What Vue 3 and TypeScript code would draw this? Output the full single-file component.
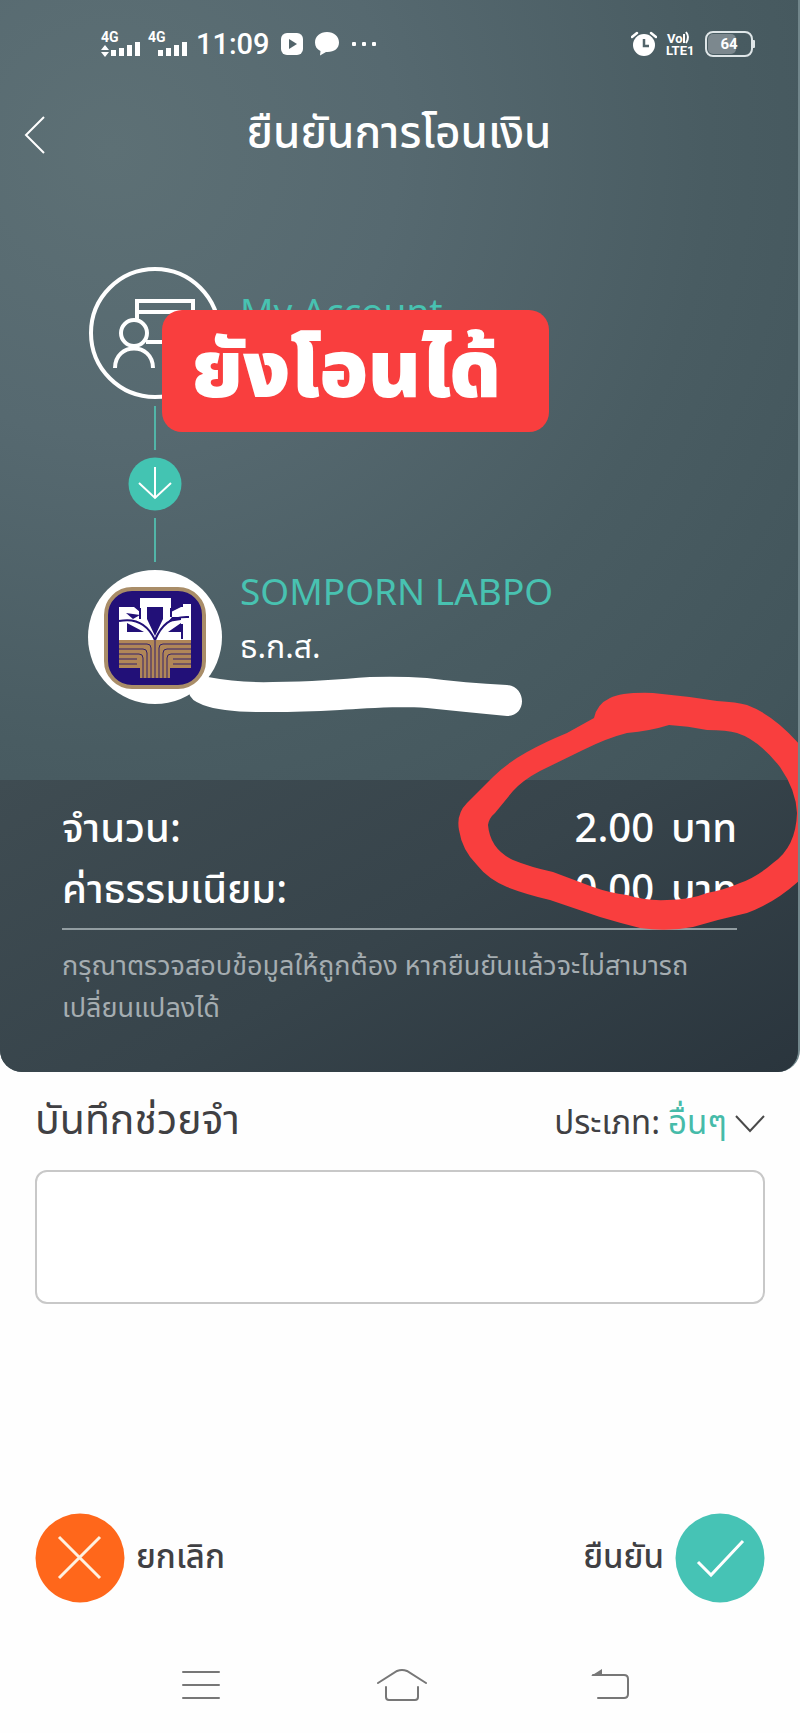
<script setup lang="ts">
import { ref } from 'vue'

interface Charge {
  label: string
  amount: string
}

const charges: Charge[] = [
  { label: 'จำนวน:', amount: '2.00' },
  { label: 'ค่าธรรมเนียม:', amount: '0.00' },
]

const memo = ref<string>('')
const category = ref<string>('อื่นๆ')
const bars: number[] = [6, 8, 11, 14]
</script>

<template>
  <div class="screen">
    <section class="hero">
      <div class="status">
        <div class="status-group">
          <svg class="signal" viewBox="0 0 40 36" aria-hidden="true">
            <text x="1" y="16" class="net">4G</text>
            <path d="M1 24l4-5 4 5zM1 26l4 5 4-5z" fill="#fff" />
            <rect v-for="(h, i) in bars" :key="i" :x="11 + i * 8" :y="30 - h" width="5" :height="h" fill="#fff" />
          </svg>
          <svg class="signal" viewBox="0 0 40 36" aria-hidden="true">
            <text x="1" y="16" class="net">4G</text>
            <rect v-for="(h, i) in bars" :key="i" :x="11 + i * 8" :y="30 - h" width="5" :height="h" fill="#fff" />
          </svg>
          <span class="clock">11:09</span>
          <svg class="play" viewBox="0 0 22 22" aria-hidden="true">
            <rect x="0" y="0" width="22" height="22" rx="6" fill="#fff" />
            <path d="M8 6v10l8-5z" fill="#52646a" />
          </svg>
          <svg class="bubble" viewBox="0 0 26 26" aria-hidden="true">
            <path d="M13 1C6 1 1 5.500 1 11.500c0 4 2 7 5.500 8.500L6 24.500l6-3.500c8 .5 13-3.500 13-9.500S20 1 13 1z" fill="#fff" />
          </svg>
          <svg class="dots" viewBox="0 0 26 6" aria-hidden="true">
            <rect x="1" y="1" width="4" height="4" rx="1" fill="#fff" />
            <rect x="11" y="1" width="4" height="4" rx="1" fill="#fff" />
            <rect x="21" y="1" width="4" height="4" rx="1" fill="#fff" />
          </svg>
        </div>
        <div class="status-group system-info">
          <svg class="alarm" viewBox="0 0 26 26" aria-hidden="true">
            <circle cx="13" cy="14" r="11" fill="#fff" />
            <path d="M1 6l5-4M25 6l-5-4" stroke="#fff" stroke-width="2.500" stroke-linecap="round" />
            <path d="M13 8v7h5" fill="none" stroke="#52646a" stroke-width="2.500" />
          </svg>
          <svg class="volte" viewBox="0 0 30 30" aria-hidden="true">
            <text x="1" y="14" class="vo">Vo</text>
            <path d="M18 5v9M20 3q4 5 0 11" fill="none" stroke="#fff" stroke-width="2" />
            <text x="0" y="26" class="vo">LTE1</text>
          </svg>
          <svg class="battery" viewBox="0 0 50 26" aria-hidden="true">
            <rect x="3" y="3" width="28" height="20" rx="5" fill="#7c888e" />
            <rect x="1" y="1" width="46" height="24" rx="7" fill="none" stroke="#dfe6e8" stroke-width="2" />
            <rect x="47" y="9" width="3" height="8" rx="1" fill="#dfe6e8" />
            <text x="24" y="18" text-anchor="middle" class="level">64</text>
          </svg>
        </div>
      </div>

      <header class="topbar">
        <button class="back" type="button" aria-label="กลับ">
          <svg viewBox="0 0 22 38" aria-hidden="true">
            <path d="M20 1L2 19l18 18" fill="none" stroke="#fff" stroke-width="2" />
          </svg>
        </button>
        <h1>ยืนยันการโอนเงิน</h1>
      </header>

      <div class="transfer">
        <div class="party from">
          <svg class="avatar" viewBox="0 0 134 134" aria-hidden="true">
            <g fill="none" stroke="#fff" stroke-width="4">
              <circle cx="67" cy="67" r="64" />
              <circle cx="46" cy="67" r="13" />
              <path d="M27 102c0-26 38-26 38 0M49 54V35h56v41H58M49 46h56" />
            </g>
          </svg>
          <p class="name">My Account</p>
        </div>
        <div class="flow">
          <span class="line"></span>
          <svg class="arrow" viewBox="0 0 54 54" aria-hidden="true">
            <circle cx="27" cy="27" r="26.500" fill="#43c4b2" />
            <path d="M27 10v31M11 26l16 15 16-15" fill="none" stroke="#fff" stroke-width="2" />
          </svg>
          <span class="line"></span>
        </div>
        <div class="party">
          <svg class="avatar" viewBox="0 0 134 134" aria-hidden="true">
            <circle cx="67" cy="67" r="67" fill="#fff" />
            <rect x="18" y="19" width="98" height="98" rx="26" fill="#221078" stroke="#a98d68" stroke-width="4" />
            <path d="M31 37h15l6 5V28h31v14l10-5h2v-3h8v36H31z" fill="#fff" />
            <path d="M59 37h16v12l-8 17-8-17zM38 43l14 2-7 4zM84 47h9v3l-13 2zM39 53l17 9H39zM80 62l13-9v9z" fill="#221078" />
            <path d="M31 51c20-4 30 6 36 19 6-14 15-24 34-23M94 54v15M52 38v11M83 38v9" fill="none" stroke="#221078" stroke-width="2" />
            <path d="M31 70h72v28H82v10H52V98H31z" fill="#b08658" />
            <g fill="none" stroke="#33206a" stroke-width="1">
              <path d="M31 74h28q4 0 4 4v30M31 79h24q4 0 4 4v25M31 84h20q4 0 4 4v20M31 89h18M31 94h18M67 70v38" />
              <path d="M103 74H75q-4 0-4 4v30M103 79H79q-4 0-4 4v25M103 84H83q-4 0-4 4v20M103 89H85M103 94H85" />
            </g>
          </svg>
          <div>
            <p class="name">SOMPORN LABPO</p>
            <p class="bank">ธ.ก.ส.</p>
          </div>
        </div>
        <svg class="mask" viewBox="188 676 336 42" aria-hidden="true">
          <path d="M208 677Q240 683 273 682C310 682 340 679 370 677Q400 676 427 678Q465 683 507 685C527 687 527 716 507 716Q465 712 427 708C390 706 360 709 340 710Q300 712 273 712Q225 713 203 705Q190 700 189 693z" fill="#fff" />
        </svg>
        <strong class="sticker">ยังโอนได้</strong>
      </div>

      <div class="summary">
        <dl>
          <div v-for="charge in charges" :key="charge.label" class="charge">
            <dt>{{ charge.label }}</dt>
            <dd><span>{{ charge.amount }}</span><span>บาท</span></dd>
          </div>
        </dl>
        <p class="notice">กรุณาตรวจสอบข้อมูลให้ถูกต้อง หากยืนยันแล้วจะไม่สามารถ<br />เปลี่ยนแปลงได้</p>
      </div>

      <svg class="ring" viewBox="456 690 344 242" aria-hidden="true">
        <path
          fill="#f93e3e"
          fill-rule="evenodd"
          d="M594 718Q597 704 610 698Q622 692 653 693Q685 696 717 701Q737 702 747 705Q774 715 800 745V880Q775 903 747 913Q720 919 693 927Q667 932 640 928Q620 923 600 917L550 900Q525 894 507 887Q488 879 477 865Q462 850 459 830Q456 814 467 803L493 777Q507 763 527 752Q545 742 567 733zM488 825Q489 818 495 813L513 791Q523 780 540 771L583 750Q607 738 627 733Q650 731 669 725Q688 726 707 730Q727 730 737 733Q759 740 780 767Q796 790 797 813Q796 847 773 863Q757 877 740 883Q724 890 707 893Q690 900 667 900Q645 901 627 895Q610 893 593 887L553 872Q530 867 513 860Q490 849 488 825z"
        />
      </svg>
    </section>

    <form class="details" @submit.prevent>
      <div class="memo-head">
        <label class="memo-label" for="memo">บันทึกช่วยจำ</label>
        <div class="category">
          <label for="category">ประเภท:</label>
          <select id="category" v-model="category">
            <option>อื่นๆ</option>
          </select>
          <svg viewBox="0 0 30 18" aria-hidden="true">
            <path d="M1 1l14 15L29 1" fill="none" stroke="#4a4a4a" stroke-width="2" />
          </svg>
        </div>
      </div>
      <textarea id="memo" v-model="memo"></textarea>
      <div class="actions">
        <button type="button">
          <svg viewBox="0 0 90 90" aria-hidden="true">
            <circle cx="45" cy="45" r="44.500" fill="#ff671b" />
            <path d="M24 24l41 41M65 24L24 65" stroke="#fff1e0" stroke-width="3" />
          </svg>
          <span>ยกเลิก</span>
        </button>
        <button type="submit">
          <span>ยืนยัน</span>
          <svg viewBox="0 0 90 90" aria-hidden="true">
            <circle cx="45" cy="45" r="44.500" fill="#46c3b5" />
            <path d="M23 49l13 13 32-34" fill="none" stroke="#fff" stroke-width="3" />
          </svg>
        </button>
      </div>
    </form>

    <nav class="system">
      <button type="button" aria-label="เมนู">
        <svg viewBox="0 0 54 36" aria-hidden="true">
          <path d="M9 5h36M9 18h36M9 31h36" fill="none" stroke="#777" stroke-width="2" stroke-linecap="round" />
        </svg>
      </button>
      <button type="button" aria-label="หน้าหลัก">
        <svg viewBox="0 0 54 36" aria-hidden="true">
          <path d="M1 16L20 4q5-2 10 0l19 12M9 20v10q0 3 3 3h26q3 0 3-3V20" fill="none" stroke="#777" stroke-width="2" stroke-linecap="round" />
        </svg>
      </button>
      <button type="button" aria-label="ย้อนกลับ">
        <svg viewBox="0 0 54 36" aria-hidden="true">
          <path d="M12 8h31q4 0 4 4v15q0 4-4 4H17" fill="none" stroke="#777" stroke-width="2" stroke-linecap="round" />
          <path d="M10 9l11-7v7z" fill="#777" />
        </svg>
      </button>
    </nav>
  </div>
</template>

<style>
body {
  margin: 0;
  background: #fefefe;
}
</style>

<style scoped>
.screen {
  display: flex;
  flex-direction: column;
  min-height: 100vh;
  color: #404043;
  font-family: "Noto Sans Thai", "Noto Sans", "Open Sans", sans-serif;
}
.screen * {
  box-sizing: border-box;
}
svg {
  display: block;
  flex: none;
}
p, h1, dl, dd {
  margin: 0;
}
button {
  border: 0;
  padding: 0;
  background: none;
  color: inherit;
  font: inherit;
  cursor: pointer;
}
.hero {
  position: relative;
  overflow: hidden;
  border-right: 2px solid #71868b;
  border-radius: 0 0 22px 22px;
  background: radial-gradient(circle at 14% 14%, #5d7075 0%, #566970 25%, #495c62 52%, #42555b 75%, #37494f 100%);
  color: #fff;
}
.status {
  display: flex;
  align-items: center;
  justify-content: space-between;
  height: 88px;
  padding: 0 43px 0 100px;
}
.status-group {
  display: flex;
  align-items: center;
  gap: 11px;
}
.system-info {
  gap: 9px;
}
.signal {
  width: 40px;
  height: 36px;
  margin-right: -4px;
}
.net, .vo, .level {
  fill: #fff;
  font-family: Roboto, sans-serif;
  font-weight: 700;
}
.net {
  font-size: 14px;
}
.vo {
  font-size: 13px;
}
.level {
  font-size: 15px;
}
.clock {
  margin-left: 2px;
  font: 500 29px/36px Roboto, sans-serif;
}
.play {
  width: 22px;
  height: 22px;
}
.bubble {
  width: 26px;
  height: 26px;
}
.dots {
  width: 26px;
  height: 6px;
}
.alarm {
  width: 26px;
  height: 26px;
}
.volte {
  width: 30px;
  height: 30px;
}
.battery {
  width: 50px;
  height: 26px;
}
.topbar {
  display: grid;
  grid-template-columns: 64px 1fr 64px;
  align-items: center;
  height: 94px;
}
.back {
  padding-left: 24px;
}
.back svg {
  width: 22px;
  height: 38px;
}
h1 {
  text-align: center;
  font-size: 44px;
  font-weight: 500;
  line-height: 60px;
}
.transfer {
  position: relative;
  height: 598px;
  padding: 84px 88px 0;
}
.party {
  display: flex;
  gap: 18px;
}
.avatar {
  width: 134px;
  height: 134px;
}
.name {
  color: #48c2b1;
  font-size: 37px;
  line-height: 48px;
}
.from .name {
  padding-top: 24px;
}
.bank {
  margin-top: 8px;
  font-size: 32px;
  line-height: 44px;
}
.flow {
  display: flex;
  flex-direction: column;
  align-items: center;
  gap: 7px;
  width: 134px;
  padding: 6px 0 8px;
}
.line {
  width: 2px;
  height: 44px;
  background: #52b5a8;
}
.arrow {
  width: 54px;
  height: 54px;
}
.mask {
  position: absolute;
  left: 188px;
  top: 494px;
  width: 336px;
  height: 42px;
}
.sticker {
  position: absolute;
  left: 162px;
  top: 128px;
  padding: 4px 48px 0 30px;
  border-radius: 20px;
  background: #f93e3e;
  font-size: 80px;
  font-weight: 900;
  line-height: 118px;
  white-space: nowrap;
}
.summary {
  height: 292px;
  padding: 20px 61px 0 62px;
  background: linear-gradient(150deg, #3f4c52 0%, #37444b 50%, #2a353d 100%);
}
dl {
  padding-bottom: 6px;
  border-bottom: 2px solid #929da1;
}
.charge {
  display: flex;
  justify-content: space-between;
  font-size: 40px;
  font-weight: 500;
  line-height: 61px;
}
dd {
  display: flex;
  gap: 17px;
}
.notice {
  padding-top: 16px;
  color: #a5adb1;
  font-size: 27px;
  line-height: 42px;
  white-space: nowrap;
}
.ring {
  position: absolute;
  right: -2px;
  top: 690px;
  width: 344px;
  height: 242px;
}
.details {
  display: flex;
  flex: 1;
  flex-direction: column;
  padding: 0 35px;
}
.memo-head {
  display: flex;
  align-items: center;
  justify-content: space-between;
  height: 98px;
}
.memo-label {
  font-size: 41px;
}
.category {
  display: flex;
  align-items: center;
  gap: 8px;
  padding-top: 5px;
  font-size: 33px;
}
select {
  appearance: none;
  border: 0;
  padding: 0;
  background: none;
  color: #46bba9;
  font: inherit;
}
.category svg {
  width: 30px;
  height: 18px;
}
textarea {
  display: block;
  width: 100%;
  height: 134px;
  padding: 16px;
  border: 2px solid #c8c8c8;
  border-radius: 12px;
  background: #fff;
  font: inherit;
  font-size: 27px;
  resize: none;
}
.actions {
  display: flex;
  justify-content: space-between;
  margin-top: auto;
  padding-bottom: 47px;
}
.actions button {
  display: flex;
  align-items: center;
  gap: 11px;
  font-size: 33px;
  font-weight: 500;
}
.actions svg {
  width: 90px;
  height: 90px;
}
.system {
  display: grid;
  grid-template-columns: repeat(3, 1fr);
  justify-items: center;
  height: 83px;
  padding: 17px 90px 0 99px;
}
.system button {
  height: 36px;
}
.system svg {
  width: 54px;
  height: 36px;
}
</style>
